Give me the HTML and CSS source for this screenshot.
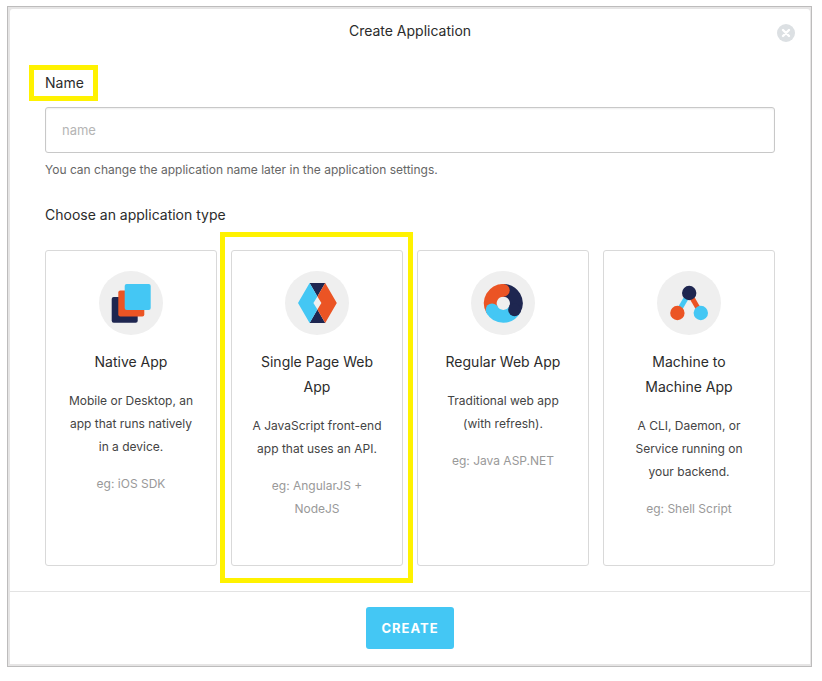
FILE: index.html
```html
<!DOCTYPE html>
<html lang="en">
<head>
    <meta charset="UTF-8">
    <title>Create Application</title>
    <link rel="stylesheet" href="styles.css">
</head>
<body>
    <div class="backdrop">
        <form class="modal">
            <header class="modal-header">
                <h1>Create Application</h1>
                <button type="button" class="close" aria-label="Close">
                    <svg width="18" height="18" viewBox="0 0 18 18">
                        <circle cx="9" cy="9" r="9" fill="#dce0e3"/>
                        <path d="M6 6l6 6M12 6l-6 6" stroke="#fff" stroke-width="2.4" stroke-linecap="round"/>
                    </svg>
                </button>
            </header>

            <div class="modal-body">
                <label class="field-label highlight" for="name">Name</label>
                <input type="text" id="name" class="text-input" placeholder="name">
                <p class="help">You can change the application name later in the application settings.</p>

                <h2>Choose an application type</h2>
                <div class="types">
                    <button type="button" class="card">
                        <svg class="icon" viewBox="0 0 64 64">
                            <circle cx="32" cy="32" r="32" fill="#efefef"/>
                            <rect x="12.7" y="26" width="26" height="25.7" rx="2" fill="#1e2650"/>
                            <rect x="19.3" y="19.4" width="26" height="26" rx="2" fill="#eb5424"/>
                            <rect x="25.7" y="13" width="26" height="26" rx="2" fill="#44c7f4"/>
                        </svg>
                        <span class="card-title">Native App</span>
                        <span class="card-text">Mobile or Desktop, an app that runs natively in a device.</span>
                        <span class="card-example">eg: iOS SDK</span>
                    </button>

                    <button type="button" class="card highlight">
                        <svg class="icon" viewBox="0 0 64 64">
                            <circle cx="32" cy="32" r="32" fill="#efefef"/>
                            <path d="M24.6 12h15.6l-7.8 13.4zM24.6 52h15.6l-7.8-13.4z" fill="#1e2650"/>
                            <path d="M24.6 12l7.8 13.4-4 6.6 4 6.6L24.6 52 13 32z" fill="#44c7f4"/>
                            <path d="M40.2 12l-7.8 13.4 4 6.6-4 6.6L40.2 52l11.6-20z" fill="#eb5424"/>
                        </svg>
                        <span class="card-title">Single Page Web App</span>
                        <span class="card-text">A JavaScript front-end app that uses an API.</span>
                        <span class="card-example">eg: AngularJS + NodeJS</span>
                    </button>

                    <button type="button" class="card">
                        <svg class="icon" viewBox="0 0 64 64">
                            <circle cx="32" cy="32" r="32" fill="#efefef"/>
                            <g fill="none" stroke-width="12.8">
                                <path d="M32.3 19.3a13 13 0 0 1 11.26 19.5" stroke="#1e2650"/>
                                <path d="M43.56 38.8a13 13 0 0 1-22.52 0" stroke="#44c7f4"/>
                                <path d="M21.04 38.8A13 13 0 0 1 32.3 19.3" stroke="#eb5424"/>
                            </g>
                            <circle cx="32.3" cy="19.3" r="6.4" fill="#eb5424"/>
                            <circle cx="43.56" cy="38.8" r="6.4" fill="#1e2650"/>
                            <circle cx="21.04" cy="38.8" r="6.4" fill="#44c7f4"/>
                        </svg>
                        <span class="card-title">Regular Web App</span>
                        <span class="card-text">Traditional web app (with refresh).</span>
                        <span class="card-example">eg: Java ASP.NET</span>
                    </button>

                    <button type="button" class="card">
                        <svg class="icon" viewBox="0 0 64 64">
                            <circle cx="32" cy="32" r="32" fill="#efefef"/>
                            <path d="M32.2 22L20.4 42" stroke="#44c7f4" stroke-width="5"/>
                            <path d="M32.2 22l11.6 20" stroke="#eb5424" stroke-width="5"/>
                            <circle cx="32.2" cy="22" r="7.2" fill="#1e2650"/>
                            <circle cx="20.4" cy="42" r="7.2" fill="#eb5424"/>
                            <circle cx="43.8" cy="42" r="7.2" fill="#44c7f4"/>
                        </svg>
                        <span class="card-title">Machine to Machine App</span>
                        <span class="card-text">A CLI, Daemon, or Service running on your backend.</span>
                        <span class="card-example">eg: Shell Script</span>
                    </button>
                </div>
            </div>

            <footer class="modal-footer">
                <button type="submit" class="create">CREATE</button>
            </footer>
        </form>
    </div>
</body>
</html>
```
FILE: styles.css
```css
* {
    box-sizing: border-box;
}

body {
    margin: 6px 10px 14px 7px;
    font-family: Inter, "Liberation Sans", sans-serif;
    font-size: 12px;
    color: #333;
    background-color: #fff;
}

button,
input {
    font-family: inherit;
}

.backdrop {
    padding: 2px 1px 2px 2px;
    border: 1px solid #bdbcbc;
    background-color: #e6e5e5;
}

.modal {
    background-color: #fff;
    border-radius: 3px 3px 0 0;
}

.modal-header {
    position: relative;
    padding: 12px 35px;
}

h1,
h2,
.field-label,
.card-title {
    margin: 0;
    font-size: 14px;
    font-weight: 400;
    color: #2b2b2b;
}

h1 {
    line-height: 20px;
    text-align: center;
}

.close {
    position: absolute;
    top: 15px;
    right: 15px;
    padding: 0;
    border: none;
    background: none;
    cursor: pointer;
}

.close svg {
    display: block;
}

.modal-body {
    padding: 20px 35px 25px;
}

.highlight {
    position: relative;
}

/* yellow frame drawn around a highlighted item */
.highlight::after {
    content: "";
    position: absolute;
    border: 5px solid #fff200;
    pointer-events: none;
}

.field-label {
    display: inline-block;
    line-height: 20px;
}

.field-label::after {
    inset: -8px -14px -8px -16px;
}

.text-input {
    display: block;
    width: 100%;
    height: 46px;
    margin-top: 14px;
    padding: 0 16px;
    border: 1px solid #c8c8c8;
    border-radius: 3px;
    box-shadow: inset 0 1px 2px #eee;
    font-size: 13px;
    color: #333;
}

.text-input::placeholder {
    color: #b5b5b5;
}

.help {
    margin: 7px 0 25px;
    line-height: 20px;
    color: #666;
}

h2 {
    line-height: 20px;
}

.types {
    display: grid;
    grid-template-columns: repeat(4, 1fr);
    gap: 14px;
    margin-top: 25px;
}

.card {
    display: flex;
    flex-direction: column;
    align-items: center;
    justify-content: flex-start;
    gap: 14px;
    padding: 20px 19px 45px;
    border: 1px solid #d9d9d9;
    border-radius: 3px;
    background-color: #fff;
    font-size: 12px;
    line-height: 23px;
    color: #444;
    cursor: pointer;
}

.card::after {
    inset: -19px -11px -18px -12px;
}

.icon {
    width: 64px;
    height: 64px;
}

.card-title {
    margin-bottom: 1px;
    line-height: 25px;
}

.card-example {
    color: #999;
}

.modal-footer {
    padding: 15px;
    border-top: 1px solid #e3e3e3;
    text-align: center;
}

.create {
    height: 42px;
    padding: 0 15px;
    border: none;
    border-radius: 3px;
    background-color: #44c7f4;
    font-size: 13px;
    font-weight: 700;
    letter-spacing: 1px;
    color: #fff;
    cursor: pointer;
}
```
